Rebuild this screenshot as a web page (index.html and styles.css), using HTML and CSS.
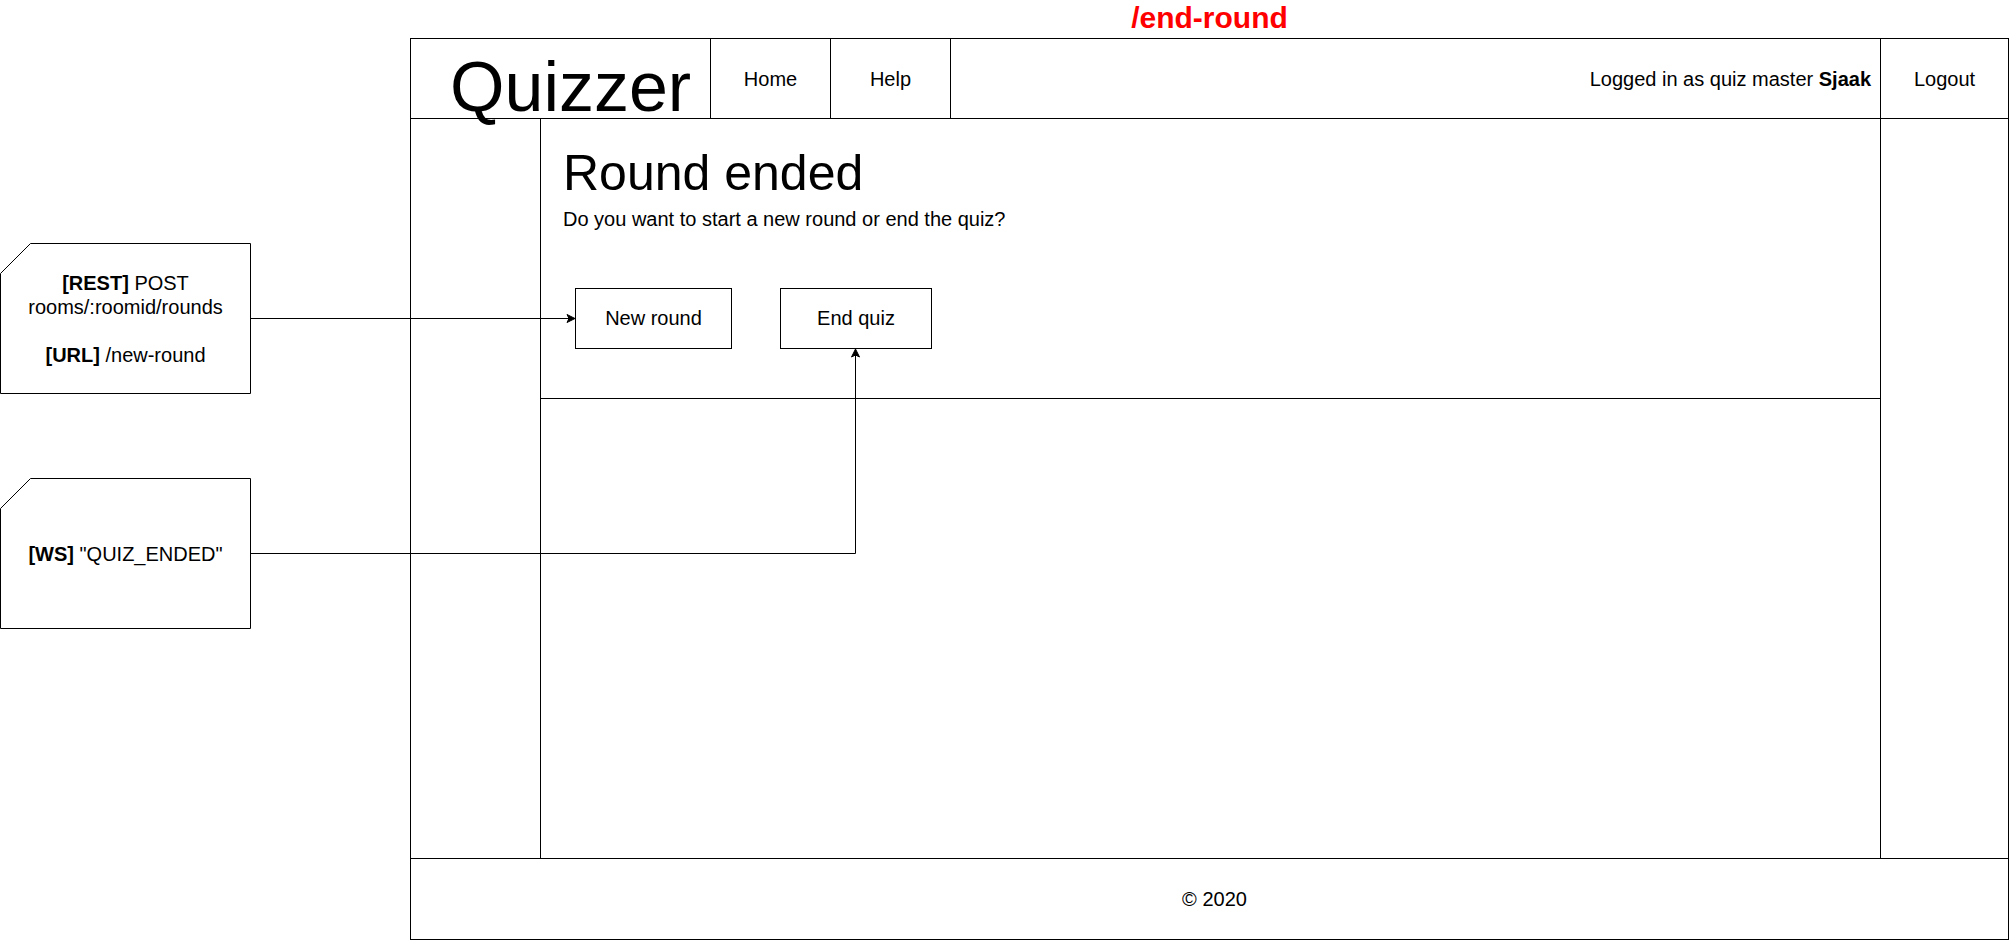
FILE: index.html
```html
<!DOCTYPE html>
<html lang="en">
<head>
<meta charset="utf-8">
<title>/end-round</title>
<link rel="stylesheet" href="styles.css">
</head>
<body>
<div class="canvas">
  <div class="mockup">
    <div class="route">/end-round</div>
    <div class="frame">
      <header class="topbar">
        <div class="logo">Quizzer</div>
        <div class="nav-item">Home</div>
        <div class="nav-item">Help</div>
        <div class="user">Logged in as quiz master&nbsp;<b>Sjaak</b></div>
        <div class="logout">Logout</div>
      </header>
      <main class="body-row">
        <aside class="side side-left"></aside>
        <section class="content">
          <div class="panel">
            <h1 class="heading">Round ended</h1>
            <p class="sub">Do you want to start a new round or end the quiz?</p>
            <div class="actions">
              <div class="btn btn-new">New round</div>
              <div class="btn btn-end">End quiz</div>
            </div>
          </div>
        </section>
        <aside class="side side-right"></aside>
      </main>
      <footer class="footer">© 2020</footer>
    </div>
  </div>

  <div class="note note-rest">
    <svg class="note-shape" viewBox="0 0 251 151" width="251" height="151"><path d="M30.5 0.5 H250.5 V150.5 H0.5 V30.5 Z" fill="#fff" stroke="#000" stroke-width="1"/></svg>
    <div class="note-text"><b>[REST]</b> POST<br>rooms/:roomid/rounds<br><br><b>[URL]</b> /new-round</div>
  </div>
  <div class="note note-ws">
    <svg class="note-shape" viewBox="0 0 251 151" width="251" height="151"><path d="M30.5 0.5 H250.5 V150.5 H0.5 V30.5 Z" fill="#fff" stroke="#000" stroke-width="1"/></svg>
    <div class="note-text"><b>[WS]</b> "QUIZ_ENDED"</div>
  </div>

  <svg class="arrows" width="2012" height="940" viewBox="0 0 2012 940">
    <path d="M251 318.5 H569" fill="none" stroke="#000" stroke-width="1"/>
    <path d="M575 318.5 L567 314.5 L569 318.5 L567 322.5 Z" fill="#000" stroke="#000" stroke-width="1" stroke-linejoin="miter"/>
    <path d="M251 553.5 H855.5 V355" fill="none" stroke="#000" stroke-width="1"/>
    <path d="M855.5 349 L851.5 357 L855.5 355 L859.5 357 Z" fill="#000" stroke="#000" stroke-width="1" stroke-linejoin="miter"/>
  </svg>
</div>
</body>
</html>
```
FILE: styles.css
```css
html, body {
  margin: 0;
  padding: 0;
  background: #fff;
  overflow: hidden;
}

.canvas {
  position: relative;
  width: 2012px;
  height: 940px;
  font-family: "Liberation Sans", Arial, sans-serif;
  color: #000;
}

.mockup {
  margin-left: 410px;
  width: 1599px;
}

.route {
  height: 38px;
  line-height: 36px;
  text-align: center;
  font-size: 30px;
  font-weight: bold;
  color: #ff0000;
}

.frame {
  box-sizing: border-box;
  height: 902px;
  border: 1px solid #000;
  display: flex;
  flex-direction: column;
}

.topbar {
  box-sizing: border-box;
  height: 80px;
  flex: none;
  display: flex;
  border-bottom: 1px solid #000;
  font-size: 20px;
}

.logo {
  box-sizing: border-box;
  width: 300px;
  flex: none;
  border-right: 1px solid #000;
  padding: 13px 0 0 39px;
  font-size: 70px;
  line-height: 70px;
  white-space: nowrap;
}

.nav-item {
  box-sizing: border-box;
  width: 120px;
  flex: none;
  border-right: 1px solid #000;
  display: flex;
  align-items: center;
  justify-content: center;
  padding-top: 2px;
}

.user {
  flex: 1;
  display: flex;
  align-items: center;
  justify-content: flex-end;
  padding: 2px 9px 0 0;
  white-space: nowrap;
}

.logout {
  box-sizing: border-box;
  width: 128px;
  flex: none;
  border-left: 1px solid #000;
  display: flex;
  align-items: center;
  justify-content: center;
  padding-top: 2px;
}

.body-row {
  box-sizing: border-box;
  height: 740px;
  flex: none;
  display: flex;
  border-bottom: 1px solid #000;
}

.side {
  box-sizing: border-box;
  flex: none;
}

.side-left {
  width: 130px;
  border-right: 1px solid #000;
}

.side-right {
  width: 128px;
  border-left: 1px solid #000;
}

.content {
  flex: 1;
}

.panel {
  box-sizing: border-box;
  height: 280px;
  border-bottom: 1px solid #000;
  padding: 29px 0 0 22px;
}

.heading {
  margin: 0;
  font-size: 50px;
  line-height: 50px;
  font-weight: normal;
}

.sub {
  margin: 9px 0 0;
  font-size: 20px;
  line-height: 24px;
}

.actions {
  display: flex;
  gap: 48px;
  margin-top: 57px;
  padding-left: 12px;
}

.btn {
  box-sizing: border-box;
  height: 61px;
  border: 1px solid #000;
  display: flex;
  align-items: center;
  justify-content: center;
  font-size: 20px;
}

.btn-new {
  width: 157px;
}

.btn-end {
  width: 152px;
}

.footer {
  flex: 1;
  display: flex;
  align-items: center;
  justify-content: center;
  padding-left: 10px;
  font-size: 20px;
}

.note {
  position: absolute;
  left: 0;
  width: 251px;
  height: 151px;
  display: flex;
  align-items: center;
  justify-content: center;
  text-align: center;
  font-size: 20px;
  line-height: 24px;
}

.note-rest {
  top: 243px;
}

.note-ws {
  top: 478px;
}

.note-shape {
  position: absolute;
  left: 0;
  top: 0;
}

.note-text {
  position: relative;
}

.arrows {
  position: absolute;
  left: 0;
  top: 0;
  pointer-events: none;
}
```
